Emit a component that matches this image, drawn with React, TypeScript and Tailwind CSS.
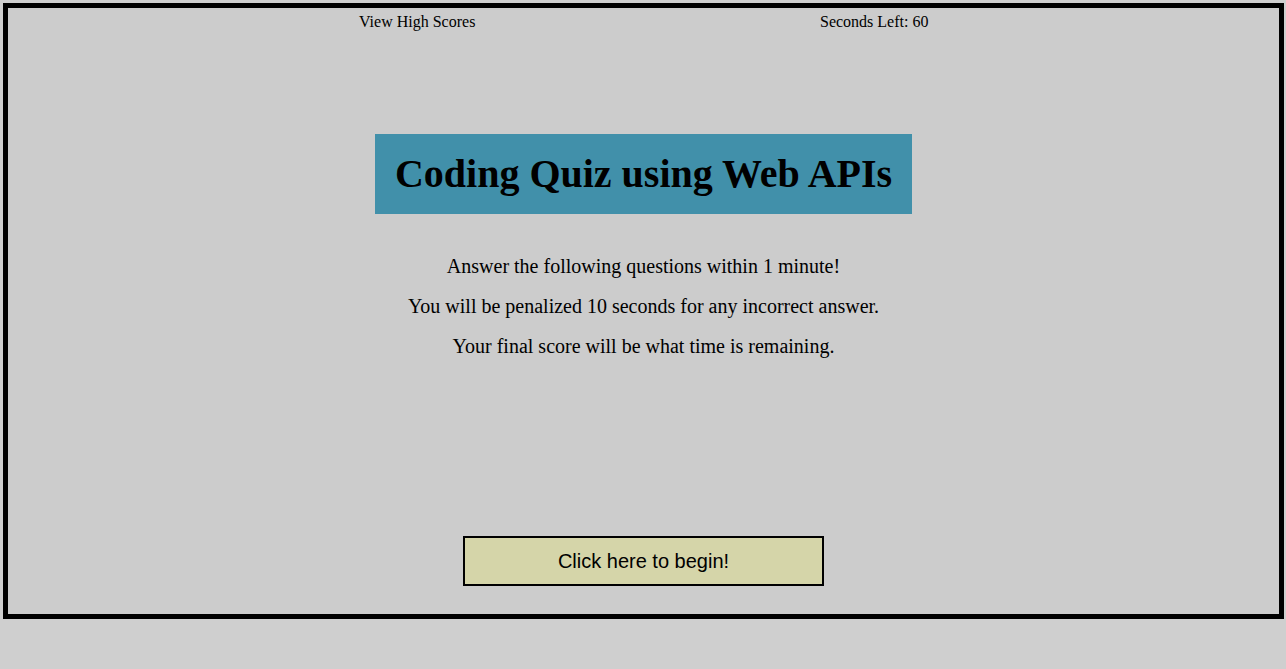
export default function App() {
  return (
    <div className="min-h-[669px] bg-[#cfcfcf] pl-[3px] pt-[3px] font-['Liberation_Serif',serif] text-black">
      <div className="flex h-[616px] w-[1281px] flex-col border-[5px] border-black bg-[#cccccc]">
        {/* Top bar */}
        <div className="flex pl-[351px] pt-[5px] text-[16px] leading-[18px]">
          <a className="w-[461px] cursor-pointer">View High Scores</a>
          <span>Seconds Left: 60</span>
        </div>

        {/* Title */}
        <div className="mt-[103px] flex justify-center">
          <h1 className="flex h-[80px] items-center bg-[#4190aa] px-[20px] text-[40px] font-bold leading-none">
            Coding Quiz using Web APIs
          </h1>
        </div>

        {/* Rules */}
        <div className="mt-[32px] text-center text-[20px] leading-[40px]">
          <p>Answer the following questions within 1 minute!</p>
          <p>You will be penalized 10 seconds for any incorrect answer.</p>
          <p>Your final score will be what time is remaining.</p>
        </div>

        {/* Start */}
        <div className="mt-auto mb-[28px] flex justify-center">
          <button className="h-[50px] w-[361px] border-2 border-black bg-[#d5d5a9] font-['Liberation_Sans',Arial,sans-serif] text-[20px]">
            Click here to begin!
          </button>
        </div>
      </div>
    </div>
  );
}
